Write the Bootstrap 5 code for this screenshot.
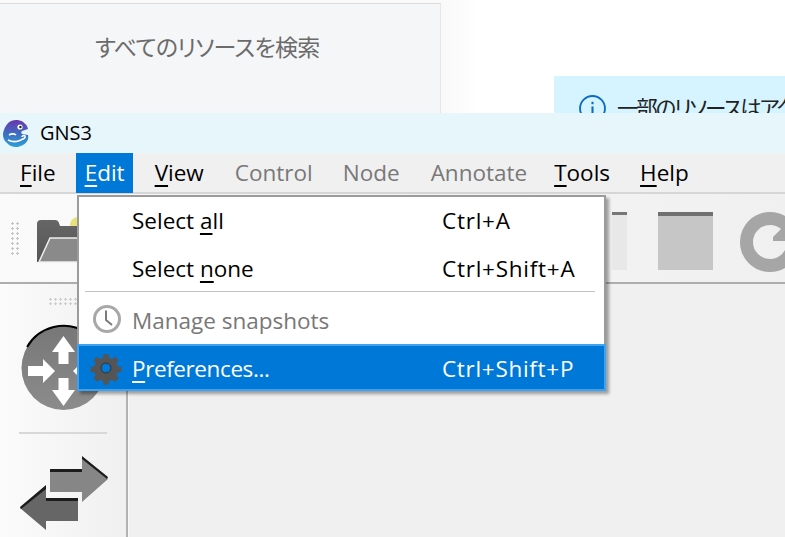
<!DOCTYPE html>
<html lang="ja">
<head>
<meta charset="utf-8">
<title>GNS3</title>
<link href="https://cdn.jsdelivr.net/npm/bootstrap@5.3.0/dist/css/bootstrap.min.css" rel="stylesheet">
<style>
html,body{margin:0;width:785px;height:537px;overflow:hidden;background:#fff;}
body{font-family:"Open Sans","Noto Sans",sans-serif;position:relative;color:#000;}
.back-layer{height:113px;overflow:hidden;background:linear-gradient(90deg,#f9f9fa 441px,#fff 480px);}
.search-panel{width:441px;height:113px;background:#f5f6f8;border-top:1px solid #dcdcdc;border-right:1px solid #e6e6e6;margin-top:3px;font-family:"Noto Sans CJK JP",sans-serif;font-feature-settings:"palt";font-size:23px;letter-spacing:-.7px;color:#6b6b6b;padding:25px 0 0 95px;white-space:nowrap;}
.notice-box{position:absolute;left:554px;top:76px;width:231px;height:60px;background:#d6f4ff;font-family:"Noto Sans CJK JP",sans-serif;font-feature-settings:"palt";font-size:21.5px;letter-spacing:-2.2px;color:#222;padding:15px 0 0 25px;white-space:nowrap;overflow:hidden;gap:11px;}
.app-window{position:absolute;left:0;top:113px;width:785px;height:424px;display:flex;flex-direction:column;}
.title-strip{height:40px;background:#e6f6fa;font-size:20px;padding-left:3px;gap:11px;flex:none;}
.menu-strip{height:41px;background:#f0f0f0;border-bottom:2px solid #d6d6d6;font-size:22.5px;flex:none;padding-left:5px;}
.menu-entry{height:40px;padding:0 15px;line-height:40px;white-space:nowrap;}
.menu-entry.is-off{color:#787878;}
.menu-entry.is-open{background:#0078d7;color:#fff;width:57px;padding:0 0 0 9px;margin:0 7px 0 5px;}
.menu-entry.is-wide{padding-right:16px;}
.menu-entry.is-tight{padding-right:12px;}
.tool-strip{height:90px;flex:none;background:linear-gradient(90deg,#fafafa,#f0f0f0);border-bottom:2px solid #adadad;position:relative;padding-left:10px;}
.grip-v{width:10px;height:34px;background-image:radial-gradient(#c4c4c4 1px,transparent 1.3px);background-size:5px 5px;}
.lower-zone{flex:1;min-height:0;}
.dock-left{width:126px;background:linear-gradient(90deg,#fbfbfb,#f0f0f0);flex:none;padding-top:13px;}
.grip-h{width:30px;height:9px;margin-left:48px;background-image:radial-gradient(#c8c8c8 1px,transparent 1.3px);background-size:5px 4.5px;}
.dock-rule{width:88px;height:2px;background:#d8d8d8;margin:16px 0 20px 19px;}
.dock-split{width:2px;background:#b2b2b2;flex:none;}
.work-area{flex:1;background:#f0f0f0;border-left:1px solid #f8f8f8;}
.pop-menu{position:absolute;left:77px;top:195px;width:529px;height:196px;background:#fff;border:2px solid #9b9b9b;box-shadow:3px 3px 3px rgba(0,0,0,.35);font-size:22.5px;padding-top:1px;}
.pop-item{height:48px;line-height:46px;padding-left:53px;white-space:nowrap;position:relative;}
.pop-item.is-short{height:45px;}
.pop-item.is-off{color:#787878;height:52px;line-height:58px;}
.pop-item.is-hot{background:#0078d7;color:#fff;outline:2px solid #3ea2f0;outline-offset:-2px;width:529px;margin-left:-2px;padding-left:55px;height:47px;line-height:50px;letter-spacing:-.4px;}
.pop-key{position:absolute;left:363px;top:0;letter-spacing:.75px;}
.pop-item.is-hot .pop-key{left:365px;letter-spacing:.7px;}
.pop-rule{height:1px;background:#c2c2c2;margin:0 9px 0 6px;}
.pop-icon{position:absolute;left:13px;top:12px;}
.pop-item.is-hot .pop-icon{left:13px;top:9px;}
.ul-key{text-decoration:underline;text-underline-offset:4px;text-decoration-thickness:2px;}
.tool-graphic{position:absolute;left:0;top:0;pointer-events:none;}
</style>
</head>
<body>
<div class="back-layer">
  <div class="search-panel">すべてのリソースを検索</div>
</div>
<div class="notice-box d-flex align-items-start">
  <svg width="27" height="27" viewBox="0 0 26 26" class="flex-shrink-0 mt-1"><circle cx="13" cy="13" r="12" fill="none" stroke="#0a6cc4" stroke-width="1.8"/><rect x="12" y="11" width="2" height="9" fill="#0a6cc4"/><rect x="12" y="6.500" width="2" height="2.400" fill="#0a6cc4"/></svg>
  <span>一部のリソースはアク</span>
</div>
<div class="app-window">
  <div class="title-strip d-flex align-items-center">
    <svg width="26" height="29" viewBox="0 0 26 29" class="flex-shrink-0">
      <defs><linearGradient id="lg" x1="0" y1="0" x2="0" y2="1"><stop offset="0" stop-color="#6a35b0"/><stop offset=".5" stop-color="#3f6cc0"/><stop offset="1" stop-color="#2aa0d8"/></linearGradient></defs>
      <path d="M13 1c5 0 8 2 11 6l1 3-6 2c-1 1-1 2 0 3l6 1c1 4-1 8-5 10-5 3-12 3-16-2C0 21-1 15 1 11 3 5 7 1 13 1z" fill="url(#lg)"/>
      <circle cx="17" cy="8" r="2.600" fill="#fff"/><circle cx="17.400" cy="8" r="1.200" fill="#222"/>
      <path d="M6 16c3-2 6-1 7 0M5 21c4 2 9 2 13 0 2-1 5-2 4-4-1-1-3 0-3 1" fill="none" stroke="#fff" stroke-width="1.600"/>
    </svg>
    <span>GNS3</span>
  </div>
  <div class="menu-strip d-flex align-items-start">
    <div class="menu-entry"><span class="ul-key">F</span>ile</div>
    <div class="menu-entry is-open"><span class="ul-key">E</span>dit</div>
    <div class="menu-entry is-wide"><span class="ul-key">V</span>iew</div>
    <div class="menu-entry is-off">Control</div>
    <div class="menu-entry is-off is-wide">Node</div>
    <div class="menu-entry is-off is-tight">Annotate</div>
    <div class="menu-entry"><span class="ul-key">T</span>ools</div>
    <div class="menu-entry"><span class="ul-key">H</span>elp</div>
  </div>
  <div class="tool-strip d-flex align-items-center">
    <div class="grip-v"></div>
    <svg class="tool-graphic" width="785" height="88" viewBox="0 0 785 88">
      <defs><linearGradient id="fo" x1="0" y1="0" x2="0" y2="1"><stop offset="0" stop-color="#666"/><stop offset="1" stop-color="#555"/></linearGradient></defs>
      <circle cx="78" cy="31" r="8" fill="#e8e27c"/>
      <path d="M37 30q0-4 4-4h14q3 0 4 3l1 3h18v36H37z" fill="url(#fo)"/>
      <path d="M39 68l11-24h30v24z" fill="#8a8a8a" stroke="#eee" stroke-width="1.500"/>
      <rect x="612" y="18" width="15" height="58" fill="#e8e8e8"/><rect x="612" y="18" width="15" height="3" fill="#777"/>
      <rect x="658" y="18" width="55" height="58" fill="#c6c6c6"/><rect x="658" y="18" width="55" height="4" fill="#707070"/>
      <circle cx="770" cy="48" r="23.500" fill="none" stroke="#a6a6a6" stroke-width="13"/>
      <path d="M773 43l12-12v16h-12z" fill="#a6a6a6"/>
    </svg>
  </div>
  <div class="lower-zone d-flex">
    <div class="dock-left">
      <div class="grip-h"></div>
      <svg width="126" height="110" viewBox="0 0 126 110" class="d-block">
        <defs><linearGradient id="rt" x1="0" y1="0" x2="0" y2="1"><stop offset="0" stop-color="#777"/><stop offset="1" stop-color="#8c8c8c"/></linearGradient></defs>
        <circle cx="63.500" cy="62" r="42" fill="url(#rt)"/>
        <path d="M27.100 41A42 42 0 0 1 86.500 26.800" fill="none" stroke="#000" stroke-width="2"/>
        <path d="M63.500 30l11.500 16h-6.500v12h-10V46H52z" fill="#fff"/>
        <path d="M63.500 100L75 84h-6.500V72h-10v12H52z" fill="#fff"/>
        <path d="M28 60h15v-7l12 12-12 12v-7H28z" fill="#fff"/>
        <path d="M100 60H85v-7L73 65l12 12v-7h15z" fill="#fff"/>
      </svg>
      <div class="dock-rule"></div>
      <svg width="126" height="82" viewBox="0 0 126 82" class="d-block">
        <path d="M50 15h32V3l26 22-26 23V38H50z" fill="#868686"/>
        <path d="M50 15h32v3H50zM82 2l26 21-1 2L82 5z" fill="#1c1c1c"/>
        <path d="M78 44H46V32L20 54l26 22V67h32z" fill="#666"/>
        <path d="M46 44h32v3H46zM46 31L20 53l1 2 25-20z" fill="#1c1c1c"/>
      </svg>
    </div>
    <div class="dock-split"></div>
    <div class="work-area"></div>
  </div>
</div>
<div class="pop-menu">
  <div class="pop-item">Select <span class="ul-key">a</span>ll<span class="pop-key">Ctrl+A</span></div>
  <div class="pop-item is-short">Select <span class="ul-key">n</span>one<span class="pop-key">Ctrl+Shift+A</span></div>
  <div class="pop-rule"></div>
  <div class="pop-item is-off">
    <svg class="pop-icon" width="30" height="30" viewBox="0 0 30 30"><circle cx="15" cy="15" r="12.500" fill="#fff" stroke="#a8a8a8" stroke-width="3"/><path d="M14 6.500v9.500l6 5" fill="none" stroke="#7a7a7a" stroke-width="2"/></svg>
    Manage snapshots
  </div>
  <div class="pop-item is-hot">
    <svg class="pop-icon" width="32" height="32" viewBox="0 0 32 32"><path d="M13.500 1h5l.8 4 3 1.300 3.500-2.200 3.500 3.500-2.200 3.500 1.300 3 4 .8v5l-4 .8-1.300 3 2.200 3.500-3.500 3.500-3.500-2.200-3 1.300-.8 4h-5l-.8-4-3-1.300-3.500 2.200-3.500-3.500 2.200-3.500-1.300-3-4-.8v-5l4-.8 1.300-3-2.200-3.500 3.500-3.500 3.500 2.200 3-1.300z" fill="#555" transform="translate(1 0) scale(.94)"/><circle cx="16" cy="15" r="5" fill="#0078d7" stroke="#333" stroke-width="1"/></svg>
    <span class="ul-key">P</span>references...<span class="pop-key">Ctrl+Shift+P</span>
  </div>
</div>
<script src="https://cdn.jsdelivr.net/npm/bootstrap@5.3.0/dist/js/bootstrap.bundle.min.js"></script>
</body>
</html>
